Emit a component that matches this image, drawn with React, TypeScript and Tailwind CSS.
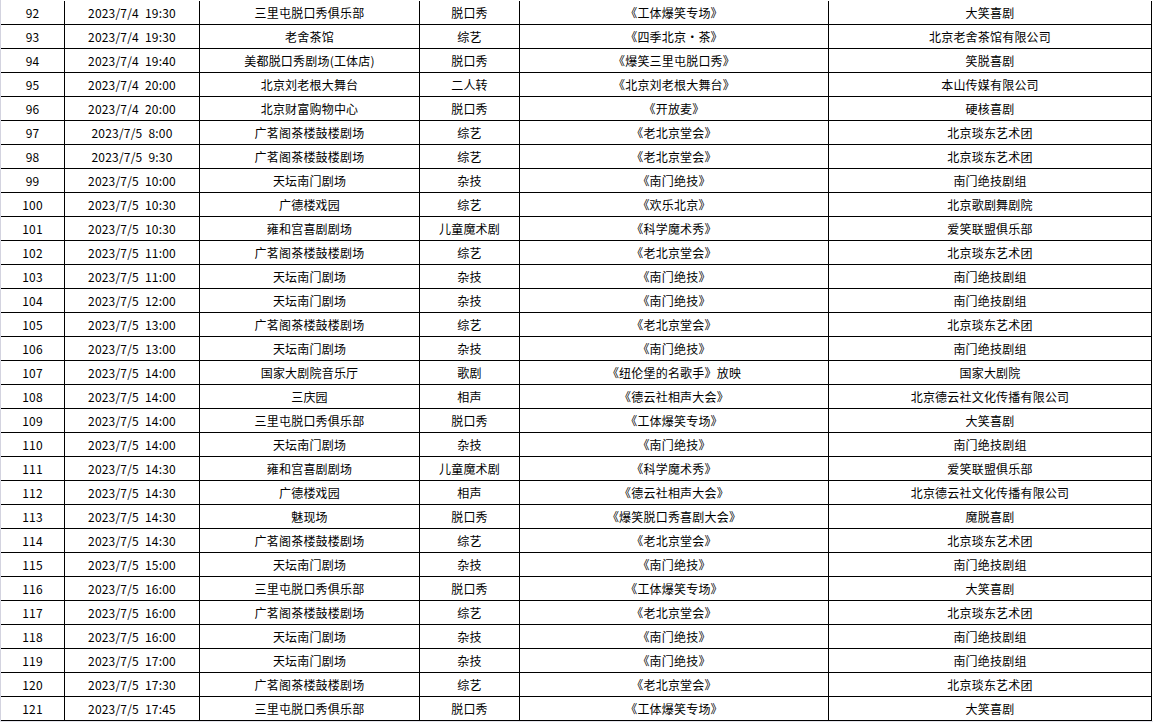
const rows: [string, string, string, string, string, string][] = [
  ["92", "2023/7/4 19:30", "三里屯脱口秀俱乐部", "脱口秀", "《工体爆笑专场》", "大笑喜剧"],
  ["93", "2023/7/4 19:30", "老舍茶馆", "综艺", "《四季北京・茶》", "北京老舍茶馆有限公司"],
  ["94", "2023/7/4 19:40", "美都脱口秀剧场(工体店)", "脱口秀", "《爆笑三里屯脱口秀》", "笑脱喜剧"],
  ["95", "2023/7/4 20:00", "北京刘老根大舞台", "二人转", "《北京刘老根大舞台》", "本山传媒有限公司"],
  ["96", "2023/7/4 20:00", "北京财富购物中心", "脱口秀", "《开放麦》", "硬核喜剧"],
  ["97", "2023/7/5 8:00", "广茗阁茶楼鼓楼剧场", "综艺", "《老北京堂会》", "北京琰东艺术团"],
  ["98", "2023/7/5 9:30", "广茗阁茶楼鼓楼剧场", "综艺", "《老北京堂会》", "北京琰东艺术团"],
  ["99", "2023/7/5 10:00", "天坛南门剧场", "杂技", "《南门绝技》", "南门绝技剧组"],
  ["100", "2023/7/5 10:30", "广德楼戏园", "综艺", "《欢乐北京》", "北京歌剧舞剧院"],
  ["101", "2023/7/5 10:30", "雍和宫喜剧剧场", "儿童魔术剧", "《科学魔术秀》", "爱笑联盟俱乐部"],
  ["102", "2023/7/5 11:00", "广茗阁茶楼鼓楼剧场", "综艺", "《老北京堂会》", "北京琰东艺术团"],
  ["103", "2023/7/5 11:00", "天坛南门剧场", "杂技", "《南门绝技》", "南门绝技剧组"],
  ["104", "2023/7/5 12:00", "天坛南门剧场", "杂技", "《南门绝技》", "南门绝技剧组"],
  ["105", "2023/7/5 13:00", "广茗阁茶楼鼓楼剧场", "综艺", "《老北京堂会》", "北京琰东艺术团"],
  ["106", "2023/7/5 13:00", "天坛南门剧场", "杂技", "《南门绝技》", "南门绝技剧组"],
  ["107", "2023/7/5 14:00", "国家大剧院音乐厅", "歌剧", "《纽伦堡的名歌手》放映", "国家大剧院"],
  ["108", "2023/7/5 14:00", "三庆园", "相声", "《德云社相声大会》", "北京德云社文化传播有限公司"],
  ["109", "2023/7/5 14:00", "三里屯脱口秀俱乐部", "脱口秀", "《工体爆笑专场》", "大笑喜剧"],
  ["110", "2023/7/5 14:00", "天坛南门剧场", "杂技", "《南门绝技》", "南门绝技剧组"],
  ["111", "2023/7/5 14:30", "雍和宫喜剧剧场", "儿童魔术剧", "《科学魔术秀》", "爱笑联盟俱乐部"],
  ["112", "2023/7/5 14:30", "广德楼戏园", "相声", "《德云社相声大会》", "北京德云社文化传播有限公司"],
  ["113", "2023/7/5 14:30", "魅现场", "脱口秀", "《爆笑脱口秀喜剧大会》", "魔脱喜剧"],
  ["114", "2023/7/5 14:30", "广茗阁茶楼鼓楼剧场", "综艺", "《老北京堂会》", "北京琰东艺术团"],
  ["115", "2023/7/5 15:00", "天坛南门剧场", "杂技", "《南门绝技》", "南门绝技剧组"],
  ["116", "2023/7/5 16:00", "三里屯脱口秀俱乐部", "脱口秀", "《工体爆笑专场》", "大笑喜剧"],
  ["117", "2023/7/5 16:00", "广茗阁茶楼鼓楼剧场", "综艺", "《老北京堂会》", "北京琰东艺术团"],
  ["118", "2023/7/5 16:00", "天坛南门剧场", "杂技", "《南门绝技》", "南门绝技剧组"],
  ["119", "2023/7/5 17:00", "天坛南门剧场", "杂技", "《南门绝技》", "南门绝技剧组"],
  ["120", "2023/7/5 17:30", "广茗阁茶楼鼓楼剧场", "综艺", "《老北京堂会》", "北京琰东艺术团"],
  ["121", "2023/7/5 17:45", "三里屯脱口秀俱乐部", "脱口秀", "《工体爆笑专场》", "大笑喜剧"],
];

export default function App() {
  return (
    <div className="h-[722px] w-[1153px] overflow-hidden bg-white font-['Noto_Sans_CJK_SC',sans-serif] text-[12px] text-black">
      <div className="w-[1152px] border-l border-[#d3d3df] pt-px">
        {rows.map((r) => (
          <div
            key={r[0]}
            className="grid h-6 grid-cols-[64px_135px_220px_100px_309px_323px] border-b border-black"
          >
            {r.map((cell, i) => (
              <div
                key={i}
                className="flex items-center justify-center gap-[6px] whitespace-pre border-r border-black pt-px leading-none tracking-[0.2px]"
              >
                {i === 1
                  ? cell.split(" ").map((part) => <span key={part}>{part}</span>)
                  : cell}
              </div>
            ))}
          </div>
        ))}
      </div>
      <div className="h-[2px] w-full bg-[#e4e4ec]" />
    </div>
  );
}
